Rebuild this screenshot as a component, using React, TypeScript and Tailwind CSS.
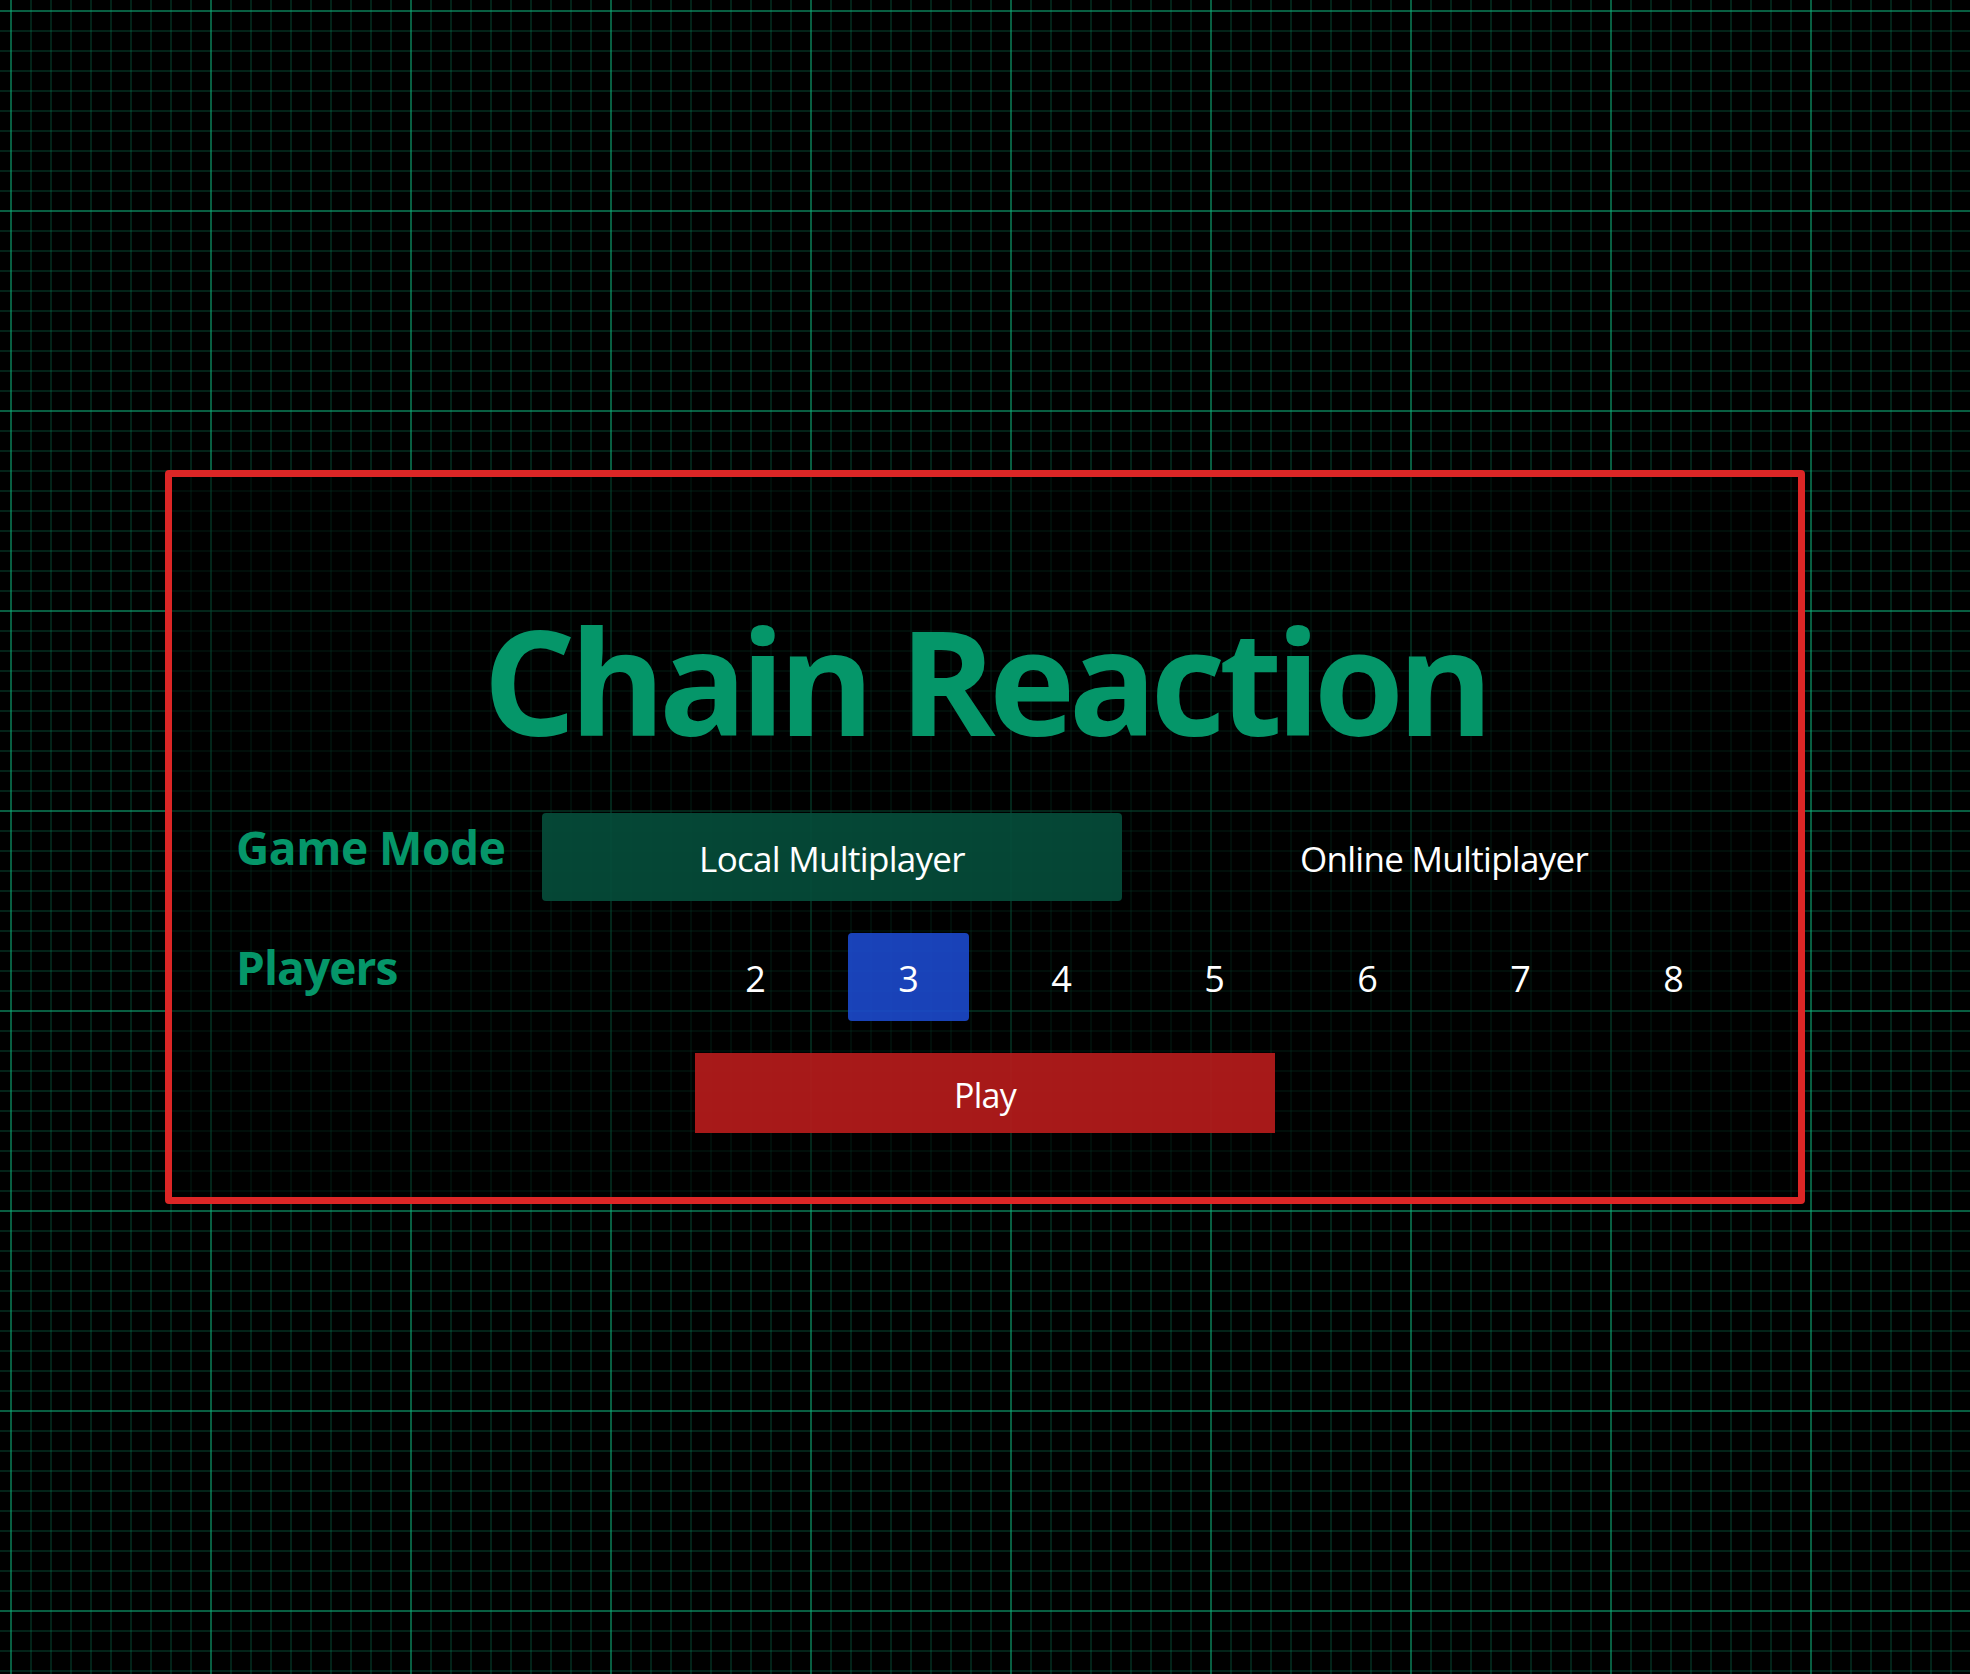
import { useState } from 'react';

const PLAYER_COUNTS = [2, 3, 4, 5, 6, 7, 8];

export default function App() {
  const [mode, setMode] = useState<'local' | 'online'>('local');
  const [players, setPlayers] = useState(3);

  return (
    <div className="min-h-screen w-full flex items-center justify-center bg-black bg-[linear-gradient(to_right,rgba(16,185,129,0.4)_2px,transparent_2px),linear-gradient(to_bottom,rgba(16,185,129,0.4)_2px,transparent_2px),linear-gradient(to_right,rgba(16,185,129,0.19)_2px,transparent_2px),linear-gradient(to_bottom,rgba(16,185,129,0.19)_2px,transparent_2px)] bg-[size:200px_200px,200px_200px,20px_20px,20px_20px] bg-[position:10px_10px] font-['Open_Sans',sans-serif]">
      {/* Menu card */}
      <div className="border-[7px] border-[#dc2626] rounded-[4px] bg-black/60 p-16">
        <div className="grid grid-cols-[repeat(10,121px)] gap-x-8 gap-y-8">
          <h1 className="col-span-10 text-center text-[146px] font-bold leading-none text-[#059669] pt-[66px] pb-[28px] tracking-[-0.045em]">
            Chain Reaction
          </h1>

          {/* Game mode */}
          <div className="col-span-2 text-[46px] font-bold leading-[1.5] text-[#059669] whitespace-nowrap tracking-[-0.01em]">
            Game Mode
          </div>
          <button
            onClick={() => setMode('local')}
            className={`col-span-4 h-[88px] pt-1 rounded-[4px] flex items-center justify-center text-[35px] tracking-[-0.02em] text-white ${
              mode === 'local' ? 'bg-[#064e3b]/90' : 'bg-transparent'
            }`}
          >
            Local Multiplayer
          </button>
          <button
            onClick={() => setMode('online')}
            className={`col-span-4 h-[88px] pt-1 rounded-[4px] flex items-center justify-center text-[35px] tracking-[-0.02em] text-white ${
              mode === 'online' ? 'bg-[#064e3b]/90' : 'bg-transparent'
            }`}
          >
            Online Multiplayer
          </button>

          {/* Players */}
          <div className="col-span-2 text-[46px] font-bold leading-[1.5] text-[#059669] tracking-[-0.02em]">
            Players
          </div>
          {PLAYER_COUNTS.map((n) => (
            <button
              key={n}
              onClick={() => setPlayers(n)}
              className={`h-[88px] pt-1 rounded-[4px] flex items-center justify-center text-[36px] text-white ${
                n === 2 ? 'col-start-4' : ''
              } ${players === n ? 'bg-[#1d4ed8]/85' : 'bg-transparent'}`}
            >
              {n}
            </button>
          ))}

          <button className="col-start-4 col-span-4 h-[80px] pt-1 bg-[#b91c1c]/90 flex items-center justify-center text-[34px] tracking-[-0.02em] text-white">
            Play
          </button>
        </div>
      </div>
    </div>
  );
}
